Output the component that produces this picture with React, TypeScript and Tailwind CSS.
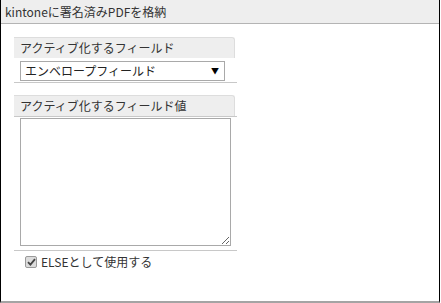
const FONT = "font-['Noto_Sans_CJK_JP','Noto_Sans',sans-serif]";

function Label({ text, bottom }: { text: string; bottom?: boolean }) {
  return (
    <div className={bottom ? "w-[223px] border-b border-[#c8c8c8]" : "w-[223px]"}>
      <div className="w-[221px] h-[21px] bg-[#eeeeee] border-t border-r border-[#dddddd] rounded-tr-[3px] pl-[6px] flex items-center text-[12px] leading-none text-[#333]">
        {text}
      </div>
    </div>
  );
}

export default function App() {
  return (
    <div className={`w-[440px] h-[303px] bg-white border-l border-r border-black border-b-2 border-b-[#a4a4a4] ${FONT}`}>
      <div className="h-[24px] bg-[#eeeeee] border-b border-[#b4b4b4] pl-[4px] flex items-center text-[12px] leading-none text-[#333]">
        kintoneに署名済みPDFを格納
      </div>

      <div className="pl-[13px]">
        <div className="mt-[13px] w-[223px] border-b border-[#c8c8c8] pb-[1px]">
          <Label text="アクティブ化するフィールド" />
          <div className="mt-[3px] ml-[6px] w-[205px] h-[20px] border border-[#a9a9a9] bg-white flex items-center justify-between pl-[4px] pr-[5px] text-[12px] leading-none text-[#222]">
            <span>エンベロープフィールド</span>
            <span className="text-[8px] text-black">▼</span>
          </div>
        </div>

        <div className="mt-[12px] w-[223px] border-b border-[#c8c8c8] pb-[4px]">
          <Label text="アクティブ化するフィールド値" bottom />
          <textarea
            readOnly
            className="block mt-[1px] ml-[6px] w-[211px] h-[128px] border border-[#a9a9a9] bg-white outline-none"
          />
        </div>

        <div className="mt-[5px] ml-[11px] flex items-center gap-[4px] text-[12px] leading-none text-[#333]">
          <span className="w-[12px] h-[12px] border border-[#9a9a9a] bg-[#dcdcdc] rounded-[2px] flex items-center justify-center">
            <svg width="9" height="8" viewBox="0 0 9 8">
              <path d="M1 4.2 L3.4 6.6 L8 1.2" fill="none" stroke="#444" strokeWidth="1.8" />
            </svg>
          </span>
          <span>ELSEとして使用する</span>
        </div>
      </div>
    </div>
  );
}
